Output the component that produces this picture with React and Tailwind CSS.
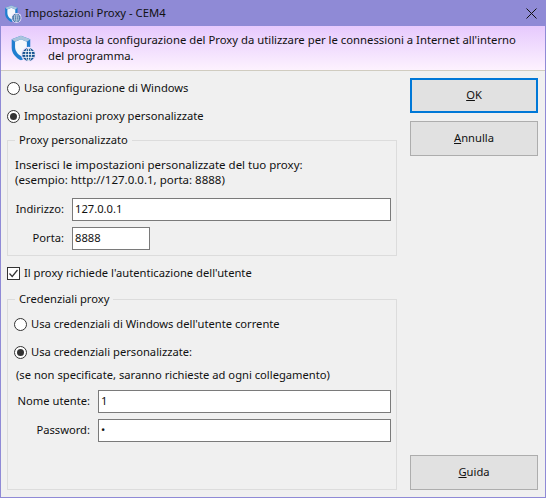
const font = { fontFamily: '"Noto Sans", sans-serif' };

const ShieldIcon = ({ size }) => (
  <svg width={size} height={size} viewBox="0 0 32 32">
    <path d="M13 1 L24 5 V15 C24 22 19 27 13 30 C7 27 2 22 2 15 V5 Z" fill="#1f7fd0" />
    <path d="M13 5 L20 8 V14 C20 19 17 23 13 25 C9 23 6 19 6 14 V8 Z" fill="#f4f8fc" />
    <path d="M2 5 L13 1 L24 5 L20 8 L13 5 L6 8 Z" fill="#a9c4dc" />
    <circle cx="22" cy="23" r="9" fill="#f0e4fd" />
    <circle cx="22" cy="23" r="7.5" fill="#13508f" />
    <path d="M14.5 23 H29.5 M15.5 19.5 H28.5 M15.5 26.5 H28.5 M22 15.5 V30.5" stroke="#ffffff" strokeWidth="1" fill="none" />
    <ellipse cx="22" cy="23" rx="3.5" ry="7.5" stroke="#ffffff" strokeWidth="1" fill="none" />
  </svg>
);

const Radio = ({ checked, label }) => (
  <label className="flex items-center gap-[4px] h-[16px] text-[11.2px] whitespace-nowrap text-[#111]">
    <span className="flex items-center justify-center w-[13px] h-[13px] rounded-full border border-[#333] bg-white">
      {checked && <span className="w-[7px] h-[7px] rounded-full bg-[#333]" />}
    </span>
    {label}
  </label>
);

const Field = ({ label, value, labelWidth, inputWidth }) => (
  <div className="flex items-center">
    <span className={`text-[11.2px] text-right whitespace-nowrap text-[#111] ${labelWidth}`}>{label}</span>
    <div className={`h-[23px] border border-[#7a7a7a] bg-white pl-[2px] ml-[8px] flex items-center text-[11.2px] text-[#111] ${inputWidth}`}>
      {value}
    </div>
  </div>
);

const Button = ({ primary, mnemonic, rest }) => (
  <button
    className={`w-[128px] h-[35px] bg-[#e1e1e1] text-[11.2px] text-[#111] ${primary ? "border-2 border-[#0078d7]" : "border border-[#adadad]"}`}
  >
    <span className="underline">{mnemonic}</span>
    {rest}
  </button>
);

export default function App() {
  return (
    <div style={font} className="w-[546px] h-[498px] flex flex-col border border-[#8f8ad6] bg-[#f0f0f0] overflow-hidden">
      <div className="h-[25px] shrink-0 bg-[#8f8ad6] flex items-center pl-[3px] pr-[8px]">
        <ShieldIcon size={18} />
        <span className="ml-[3px] text-[11.25px] text-[#111]">Impostazioni Proxy - CEM4</span>
        <svg className="ml-auto" width="11" height="11" viewBox="0 0 11 11">
          <path d="M0.5 0.5 L10.5 10.5 M10.5 0.5 L0.5 10.5" stroke="#111" strokeWidth="1" />
        </svg>
      </div>

      <div className="h-[45px] shrink-0 flex items-center border-b border-[#d0ccc0] bg-gradient-to-b from-[#e6c9fd] to-[#fdf2fe] pl-[9px]">
        <ShieldIcon size={27} />
        <p className="ml-[11px] text-[11.3px] leading-[16px] whitespace-nowrap text-[#111]">
          Imposta la configurazione del Proxy da utilizzare per le connessioni a Internet all'interno
          <br />
          del programma.
        </p>
      </div>

      <div className="flex flex-1 min-h-0">
        <div className="w-[396px] ml-[6px] pt-[9px] shrink-0">
          <Radio label="Usa configurazione di Windows" />
          <div className="mt-[12px]">
            <Radio checked label="Impostazioni proxy personalizzate" />
          </div>

          <fieldset className="mt-[8px] h-[124px] w-[390px] border border-[#dcdcdc] pl-[7px]">
            <legend className="px-[4px] text-[11.2px] text-[#111]">Proxy personalizzato</legend>
            <p className="mt-[8px] text-[11.5px] leading-[15px] text-[#111]">
              Inserisci le impostazioni personalizzate del tuo proxy:
              <br />
              (esempio: http://127.0.0.1, porta: 8888)
            </p>
            <div className="mt-[11px] flex flex-col gap-[6px]">
              <Field label="Indirizzo:" value="127.0.0.1" labelWidth="w-[49px]" inputWidth="w-[319px]" />
              <Field label="Porta:" value="8888" labelWidth="w-[49px]" inputWidth="w-[78px]" />
            </div>
          </fieldset>

          <label className="mt-[9px] flex items-center gap-[4px] h-[16px] text-[11.2px] text-[#111]">
            <span className="flex items-center justify-center w-[13px] h-[13px] border border-[#333] bg-white">
              <svg width="11" height="11" viewBox="0 0 11 11">
                <path d="M1.5 5.5 L4.2 8.5 L9.5 2" stroke="#333" strokeWidth="1.2" fill="none" />
              </svg>
            </span>
            Il proxy richiede l'autenticazione dell'utente
          </label>

          <fieldset className="mt-[10px] h-[199px] w-[390px] border border-[#dcdcdc] pl-[6px]">
            <legend className="ml-[1px] px-[4px] text-[11.2px] text-[#111]">Credenziali proxy</legend>
            <div className="mt-[9px]">
              <Radio label="Usa credenziali di Windows dell'utente corrente" />
            </div>
            <div className="mt-[12px]">
              <Radio checked label="Usa credenziali personalizzate:" />
            </div>
            <p className="mt-[6px] ml-[2px] text-[11.2px] leading-[16px] text-[#111]">
              (se non specificate, saranno richieste ad ogni collegamento)
            </p>
            <div className="mt-[7px] flex flex-col gap-[6px]">
              <Field label="Nome utente:" value="1" labelWidth="w-[76px]" inputWidth="w-[293px]" />
              <Field label="Password:" value="•" labelWidth="w-[76px]" inputWidth="w-[293px]" />
            </div>
          </fieldset>
        </div>

        <div className="flex flex-col gap-[8px] ml-[7px] pt-[7px] pb-[7px]">
          <Button primary mnemonic="O" rest="K" />
          <Button mnemonic="A" rest="nnulla" />
          <div className="mt-auto">
            <Button mnemonic="G" rest="uida" />
          </div>
        </div>
      </div>
    </div>
  );
}
